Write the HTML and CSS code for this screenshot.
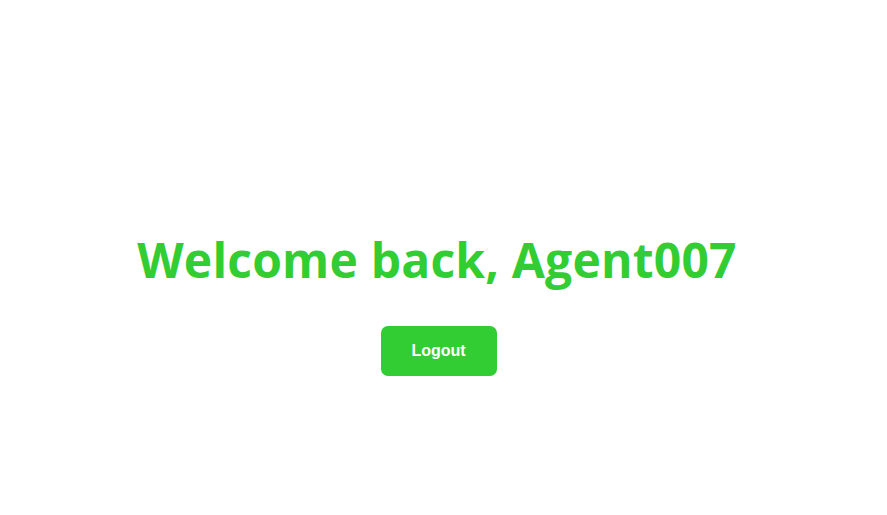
FILE: index.html
```html
<!DOCTYPE html>
<html>
<head>
<meta charset="utf-8">
<link rel="stylesheet" href="styles.css">
</head>
<body>
<main class="page">
  <h1 class="welcome">Welcome back, Agent007</h1>
  <button class="logout">Logout</button>
</main>
</body>
</html>
```
FILE: styles.css
```css
html, body {
  margin: 0;
  padding: 0;
  background: #ffffff;
}
.page {
  height: 515px;
  box-sizing: border-box;
  padding: 82px 10px 0 0;
  display: flex;
  flex-direction: column;
  align-items: center;
  justify-content: center;
}
.welcome {
  margin: 0 0 34px 0;
  font-family: "Open Sans", "Noto Sans", sans-serif;
  font-weight: 700;
  font-size: 48px;
  line-height: 64px;
  color: #32cd32;
  letter-spacing: 0.2px;
  padding: 6px 3px 0 0;
}
.logout {
  width: 116px;
  height: 50px;
  border: none;
  border-radius: 7px;
  background: #32cd32;
  color: #ffffff;
  font-family: "Liberation Sans", Arial, sans-serif;
  font-size: 16px;
  font-weight: 700;
  cursor: pointer;
}
```
